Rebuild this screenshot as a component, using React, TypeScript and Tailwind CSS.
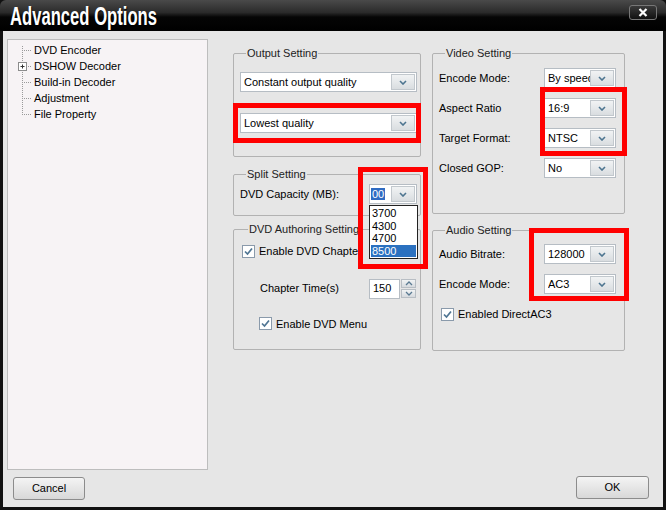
function Chevron() {
  return (
    <svg width="8" height="5" viewBox="0 0 8 5">
      <path d="M1 1 L4 4 L7 1" fill="none" stroke="#4d7590" strokeWidth="1.6" />
    </svg>
  );
}

function Select({ value, className }: { value: React.ReactNode; className: string }) {
  return (
    <div
      className={`flex h-[20px] items-center justify-between border border-[#b6bdc4] bg-white pl-[3px] pr-[1px] ${className}`}
    >
      <span className="min-w-0 flex-1 overflow-hidden whitespace-nowrap">{value}</span>
      <div className="flex h-[16px] w-[24px] shrink-0 items-center justify-center border border-[#c2c8cd] bg-[linear-gradient(to_bottom,#f1f3f4,#d9dde0)]">
        <Chevron />
      </div>
    </div>
  );
}

function Check({ label }: { label: string }) {
  return (
    <div className="flex items-center gap-[4px]">
      <div className="flex h-[13px] w-[13px] items-center justify-center border border-[#8a9aab] bg-white">
        <svg width="9" height="9" viewBox="0 0 9 9">
          <path d="M1 4.5 L3.5 7 L8 1.5" fill="none" stroke="#4f7593" strokeWidth="1.7" />
        </svg>
      </div>
      <span>{label}</span>
    </div>
  );
}

function Group({
  title,
  className,
  children,
}: {
  title: string;
  className: string;
  children: React.ReactNode;
}) {
  return (
    <fieldset className={`rounded-[2px] border border-[#b2b2b2] ${className}`}>
      <legend className="ml-[6px] px-[1px] leading-[13px] text-[#222]">{title}</legend>
      {children}
    </fieldset>
  );
}

function Tree() {
  const items = ["DVD Encoder", "DSHOW Decoder", "Build-in Decoder", "Adjustment", "File Property"];
  return (
    <div className="h-[431px] w-[201px] shrink-0 border border-[#bdbdbd] bg-[#f7f3f5] pt-[2px]">
      <div className="flex">
        <svg width="26" height="80" viewBox="0 0 26 80" className="shrink-0">
          <line x1="14.5" y1="4" x2="14.5" y2="72" stroke="#9a9a9a" strokeDasharray="1 1" />
          {[0, 1, 2, 3, 4].map((i) => (
            <line
              key={i}
              x1="14"
              y1={8.5 + i * 16}
              x2="24"
              y2={8.5 + i * 16}
              stroke="#9a9a9a"
              strokeDasharray="1 1"
            />
          ))}
          <rect x="10.5" y="20.5" width="8" height="8" fill="#fff" stroke="#8c8c8c" />
          <line x1="12.5" y1="24.5" x2="16.5" y2="24.5" stroke="#333" />
          <line x1="14.5" y1="22.5" x2="14.5" y2="26.5" stroke="#333" />
        </svg>
        <div className="flex flex-col">
          {items.map((t) => (
            <div key={t} className="h-[16px] leading-[16px]">
              {t}
            </div>
          ))}
        </div>
      </div>
    </div>
  );
}

export default function App() {
  return (
    <div className="flex h-[510px] w-[666px] flex-col bg-[#111] font-['Liberation_Sans',Arial,sans-serif] text-[11px] text-black">
      {/* title bar */}
      <div className="flex h-[31px] shrink-0 items-center justify-between rounded-t-[6px] bg-[linear-gradient(to_bottom,#4a4a4a,#2b2b2b_40%,#050505_55%,#000)] pl-[10px] pr-[9px]">
        <span className="inline-block origin-left scale-x-[0.64] whitespace-nowrap text-[26px] font-bold leading-none text-white [text-shadow:1px_1px_1px_#000]">
          Advanced Options
        </span>
        <div className="mb-[6px] flex h-[15px] w-[28px] items-center justify-center rounded-[3px] border border-[#777] bg-[linear-gradient(to_bottom,#3a3a3a,#111)]">
          <svg width="10" height="9" viewBox="0 0 10 9">
            <path d="M1.5 1 L8.5 8 M8.5 1 L1.5 8" stroke="#fff" strokeWidth="2.2" />
          </svg>
        </div>
      </div>

      {/* body */}
      <div className="relative mx-[3px] mb-[3px] flex flex-1 flex-col bg-[#e6e6e6]">
        <div className="flex pl-[4px] pt-[8px]">
          <Tree />

          {/* column 1 */}
          <div className="ml-[25px] mt-[8px] flex w-[188px] flex-col">
            <Group title="Output Setting" className="pl-[6px] pb-[23px]">
              <Select value="Constant output quality" className="mt-[12px] w-[177px]" />
              <Select value="Lowest quality" className="mt-[21px] w-[177px]" />
            </Group>

            <Group title="Split Setting" className="mt-[11px] pl-[6px] pb-[11px]">
              <div className="mt-[3px] flex items-center justify-between pr-[3px]">
                <span>DVD Capacity (MB):</span>
                <Select
                  value={<span className="bg-[#2f6bc2] px-[1px] text-white">00</span>}
                  className="w-[48px] !pl-[1px]"
                />
              </div>
            </Group>

            <Group title="DVD Authoring Setting" className="mt-[7px] pl-[8px] pb-[17px]">
              <div className="mt-[7px]">
                <Check label="Enable DVD Chapter" />
              </div>
              <div className="mt-[19px] flex items-center pl-[18px]">
                <span className="w-[109px]">Chapter Time(s)</span>
                <div className="flex h-[20px] w-[31px] items-center border border-[#b6bdc4] bg-white pl-[3px]">
                  150
                </div>
                <div className="ml-[1px] flex flex-col gap-[1px]">
                  {["M2 5 L5 2 L8 5", "M2 2 L5 5 L8 2"].map((d) => (
                    <div
                      key={d}
                      className="flex h-[9px] w-[15px] items-center justify-center border border-[#b8bec4] bg-[linear-gradient(to_bottom,#f1f3f4,#d6dade)]"
                    >
                      <svg width="10" height="7" viewBox="0 0 10 7">
                        <path d={d} fill="none" stroke="#5a7a92" strokeWidth="1.3" />
                      </svg>
                    </div>
                  ))}
                </div>
              </div>
              <div className="mt-[17px] pl-[17px]">
                <Check label="Enable DVD Menu" />
              </div>
            </Group>
          </div>

          {/* column 2 */}
          <div className="ml-[11px] mt-[8px] flex w-[193px] flex-col">
            <Group title="Video Setting" className="pl-[6px] pr-[8px] pb-[35px]">
              <div className="mt-[8px] flex flex-col gap-[10px]">
                {[
                  ["Encode Mode:", "By speed"],
                  ["Aspect Ratio", "16:9"],
                  ["Target Format:", "NTSC"],
                  ["Closed GOP:", "No"],
                ].map(([l, v]) => (
                  <div key={l} className="flex items-center justify-between">
                    <span>{l}</span>
                    <Select value={v} className="w-[72px]" />
                  </div>
                ))}
              </div>
            </Group>

            <Group title="Audio Setting" className="mt-[10px] pl-[6px] pr-[8px] pb-[27px]">
              <div className="mt-[7px] flex flex-col gap-[10px]">
                {[
                  ["Audio Bitrate:", "128000"],
                  ["Encode Mode:", "AC3"],
                ].map(([l, v]) => (
                  <div key={l} className="flex items-center justify-between">
                    <span>{l}</span>
                    <Select value={v} className="w-[72px]" />
                  </div>
                ))}
              </div>
              <div className="mt-[12px] pl-[2px]">
                <Check label="Enabled DirectAC3" />
              </div>
            </Group>
          </div>
        </div>

        {/* buttons */}
        <div className="mt-[7px] flex items-start justify-between pl-[10px] pr-[14px]">
          <button className="h-[23px] w-[72px] rounded-[3px] border border-[#8c8c8c] bg-[linear-gradient(to_bottom,#f4f4f4,#d8d8d8)] text-[11px]">
            Cancel
          </button>
          <button className="-mt-[1px] h-[23px] w-[73px] rounded-[3px] border border-[#8c8c8c] bg-[linear-gradient(to_bottom,#f4f4f4,#d8d8d8)] text-[11px]">
            OK
          </button>
        </div>

        {/* dropdown list, open over the split setting */}
        <div className="absolute left-[366px] top-[174px] flex w-[49px] flex-col border border-[#222] bg-white py-[1px] leading-[12.5px]">
          <div className="pl-[2px]">3700</div>
          <div className="pl-[2px]">4300</div>
          <div className="pl-[2px]">4700</div>
          <div className="mx-[1px] bg-[#2b71c0] pl-[1px] text-white">8500</div>
        </div>

        {/* red annotation boxes */}
        <div className="pointer-events-none absolute left-[230px] top-[72px] h-[40px] w-[188px] border-[5px] border-[#f00]" />
        <div className="pointer-events-none absolute left-[537px] top-[56px] h-[69px] w-[87px] border-[5px] border-[#f00]" />
        <div className="pointer-events-none absolute left-[355px] top-[136px] h-[102px] w-[70px] border-[5px] border-[#f00]" />
        <div className="pointer-events-none absolute left-[526px] top-[197px] h-[73px] w-[100px] border-[5px] border-[#f00]" />
      </div>
    </div>
  );
}
